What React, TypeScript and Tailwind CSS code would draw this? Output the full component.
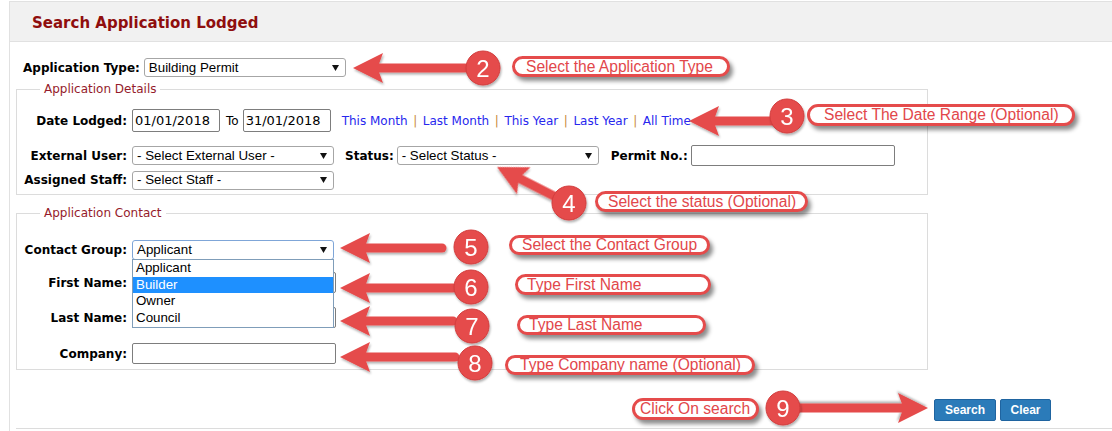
import React from 'react';

const RED = '#e54b4b';

interface SelectProps {
  value: string;
  className?: string;
  focused?: boolean;
}

const Select: React.FC<SelectProps> = ({ value, className = '', focused }) => (
  <div
    className={`flex items-center justify-between rounded-[3px] border bg-white pl-[4px] pr-[6px] font-['Liberation_Sans',Arial,sans-serif] text-[13.33px] leading-none text-black ${
      focused ? 'border-[#7fa6d8]' : 'border-[#a6a6a6]'
    } ${className}`}
  >
    <span className="whitespace-nowrap">{value}</span>
    <svg width="7" height="6" viewBox="0 0 7 6">
      <path d="M0 0H7L3.5 6Z" fill="#111" />
    </svg>
  </div>
);

const Input: React.FC<{ value?: string; className?: string }> = ({ value = '', className = '' }) => (
  <div
    className={`flex items-center rounded-[2px] border border-[#7d7d7d] bg-white pl-[2px] text-[13px] leading-none whitespace-nowrap ${className}`}
  >
    {value}
  </div>
);

const Label: React.FC<{ children: React.ReactNode }> = ({ children }) => (
  <span className="w-[110px] shrink-0 text-right text-[12px] font-bold whitespace-nowrap">{children}</span>
);

const Sep = () => <span className="mx-[1.75px] text-[#c68a3a]">|</span>;

// arrow drawn pointing left from its tip, then rotated
const Arrow: React.FC<{ x: number; y: number; len: number; angle?: number }> = ({ x, y, len, angle = 0 }) => (
  <g transform={`translate(${x} ${y}) rotate(${angle})`} filter="url(#sh)">
    <line x1={24} y1={0} x2={len} y2={0} stroke={RED} strokeWidth={9} strokeLinecap="round" />
    <path d="M0 0 L30 -15 L26 -4 L26 4 L30 15 Z" fill={RED} />
  </g>
);

const Badge: React.FC<{ x: number; y: number; n: number }> = ({ x, y, n }) => (
  <g filter="url(#sh)">
    <circle cx={x} cy={y} r={17} fill={RED} stroke="#d23c3c" strokeWidth={1} />
    <text
      x={x}
      y={y + 8.5}
      textAnchor="middle"
      fill="#fff"
      fontSize={24}
      fontFamily="'Liberation Sans', Arial, sans-serif"
    >
      {n}
    </text>
  </g>
);

const callouts = [
  { text: 'Select the Application Type', cls: 'left-[512px] top-[56px] w-[218px] h-[21px] pl-[11px]' },
  { text: 'Select The Date Range (Optional)', cls: 'left-[807px] top-[104px] w-[268px] h-[22px] pl-[14px]' },
  { text: 'Select the status (Optional)', cls: 'left-[595px] top-[191px] w-[213px] h-[21px] pl-[10px]' },
  { text: 'Select the Contact Group', cls: 'left-[509px] top-[235px] w-[201px] h-[20px] pl-[10px]' },
  { text: 'Type First Name', cls: 'left-[515px] top-[274px] w-[196px] h-[21px] pl-[9px]' },
  { text: 'Type Last Name', cls: 'left-[517px] top-[315px] w-[189px] h-[20px] pl-[9px]' },
  { text: 'Type Company name (Optional)', cls: 'left-[505px] top-[355px] w-[250px] h-[20px] pl-[12px]' },
  { text: 'Click On search', cls: 'left-[632px] top-[398px] w-[127px] h-[22px] pl-[5px]' },
];

const App: React.FC = () => {
  return (
    <div className="relative h-[431px] w-[1112px] overflow-hidden bg-white font-['DejaVu_Sans',Verdana,sans-serif] text-black">
      <div className="ml-[9px] mt-[1px] flex h-[430px] flex-col border-l border-t border-[#e1e1e1]">
        {/* Header */}
        <div className="flex h-[40px] shrink-0 items-center border-b border-[#e1e1e1] bg-[#f1f1f1] pl-[22px] pt-[3px]">
          <h1 className="text-[15px] font-bold text-[#8f0e0e]">Search Application Lodged</h1>
        </div>

        {/* Application type */}
        <div className="mt-[16px] flex h-[19px] items-center pl-[13px]">
          <span className="text-[12px] font-bold whitespace-nowrap">Application Type:</span>
          <Select className="ml-[4px] h-[19px] w-[202px]" value="Building Permit" />
        </div>

        {/* Application Details */}
        <fieldset className="ml-[6px] mt-[5px] w-[912px] border border-[#dcdcdc] pb-[5px]">
          <legend className="ml-[23px] px-[4px] text-[12px] leading-[14px] text-[#951b2b]">Application Details</legend>

          <div className="mt-[13px] flex h-[23px] items-center">
            <Label>Date Lodged:</Label>
            <Input className="ml-[5px] h-[23px] w-[88px]" value="01/01/2018" />
            <span className="ml-[6px] text-[12px]">To</span>
            <Input className="ml-[4px] h-[23px] w-[88px]" value="31/01/2018" />
            <div className="ml-[11px] text-[12px] whitespace-nowrap text-[#2727ee]">
              <span>This Month</span> <Sep /> <span>Last Month</span> <Sep /> <span>This Year</span> <Sep />{' '}
              <span>Last Year</span> <Sep /> <span>All Time</span>
            </div>
          </div>

          <div className="mt-[13px] flex h-[21px] items-center">
            <Label>External User:</Label>
            <Select className="ml-[5px] h-[19px] w-[202px]" value="- Select External User -" />
            <span className="ml-[11px] text-[12px] font-bold">Status:</span>
            <Select className="ml-[3px] h-[19px] w-[202px]" value="- Select Status -" />
            <span className="ml-[12px] text-[12px] font-bold whitespace-nowrap">Permit No.:</span>
            <Input className="ml-[3px] h-[21px] w-[204px]" />
          </div>

          <div className="mt-[5px] flex h-[18px] items-center">
            <Label>Assigned Staff:</Label>
            <Select className="ml-[5px] h-[19px] w-[202px]" value="- Select Staff -" />
          </div>
        </fieldset>

        {/* Application Contact */}
        <fieldset className="ml-[6px] mt-[11px] w-[912px] border border-[#dcdcdc] pb-[5px]">
          <legend className="ml-[23px] px-[4px] text-[12px] leading-[14px] text-[#951b2b]">Application Contact</legend>

          <div className="mt-[20px] flex h-[19px] items-center">
            <Label>Contact Group:</Label>
            <div className="relative ml-[5px]">
              <Select className="h-[20px] w-[202px]" value="Applicant" focused />
              <div className="absolute left-0 top-[19px] z-10 w-[202px] border border-[#7f9db9] bg-white font-['Liberation_Sans',Arial,sans-serif] text-[13.33px]">
                <div className="h-[17px] pl-[3px] leading-[15px]">Applicant</div>
                <div className="h-[16px] bg-[#1e90ff] pl-[3px] leading-[15px] text-white">Builder</div>
                <div className="h-[17px] pl-[3px] leading-[16px]">Owner</div>
                <div className="h-[17px] pl-[3px] leading-[16px]">Council</div>
              </div>
            </div>
          </div>

          <div className="mt-[13px] flex h-[21px] items-center">
            <Label>First Name:</Label>
            <Input className="ml-[5px] h-[21px] w-[204px]" />
          </div>
          <div className="mt-[14px] flex h-[21px] items-center">
            <Label>Last Name:</Label>
            <Input className="ml-[5px] h-[21px] w-[204px]" />
          </div>
          <div className="mt-[15px] flex h-[21px] items-center">
            <Label>Company:</Label>
            <Input className="ml-[5px] h-[21px] w-[204px]" />
          </div>
        </fieldset>

        {/* Buttons */}
        <div className="ml-[6px] mt-[29px] flex justify-end gap-[4px] border-b border-[#dcdcdc] pb-[7px] pr-[61px]">
          <button
            type="button"
            className="h-[22px] w-[62px] rounded-[2px] border border-[#1f64a0] bg-[#2b7bb9] font-['Liberation_Sans',Arial,sans-serif] text-[12px] font-bold text-white"
          >
            Search
          </button>
          <button
            type="button"
            className="h-[22px] w-[51px] rounded-[2px] border border-[#1f64a0] bg-[#2b7bb9] font-['Liberation_Sans',Arial,sans-serif] text-[12px] font-bold text-white"
          >
            Clear
          </button>
        </div>
      </div>

      {/* Annotations */}
      <svg className="pointer-events-none absolute left-0 top-0" width={1112} height={431}>
        <defs>
          <filter id="sh" x="-20%" y="-40%" width="140%" height="180%">
            <feDropShadow dx="1" dy="2" stdDeviation="1.2" floodColor="#000" floodOpacity="0.3" />
          </filter>
        </defs>
        <Arrow x={353} y={68} len={112} />
        <Arrow x={689} y={121} len={83} />
        <Arrow x={497} y={167} len={64} angle={27} />
        <Arrow x={340} y={248} len={102} />
        <Arrow x={340} y={288} len={113} />
        <Arrow x={340} y={321} len={113} />
        <Arrow x={340} y={357} len={115} />
        <Arrow x={928} y={408} len={128} angle={180} />
        <Badge x={483} y={68} n={2} />
        <Badge x={787} y={116} n={3} />
        <Badge x={569} y={203} n={4} />
        <Badge x={471} y={247} n={5} />
        <Badge x={471} y={287} n={6} />
        <Badge x={472} y={326} n={7} />
        <Badge x={475} y={363} n={8} />
        <Badge x={783} y={408} n={9} />
      </svg>

      {callouts.map((c) => (
        <div
          key={c.text}
          className={`absolute flex items-center rounded-[12px] border-[3px] border-[#e54b4b] bg-white font-['Liberation_Sans',Arial,sans-serif] text-[15.6px] leading-none whitespace-nowrap text-[#e2474b] shadow-[3px_4px_4px_rgba(0,0,0,0.45)] ${c.cls}`}
        >
          {c.text}
        </div>
      ))}
    </div>
  );
};

export default App;
